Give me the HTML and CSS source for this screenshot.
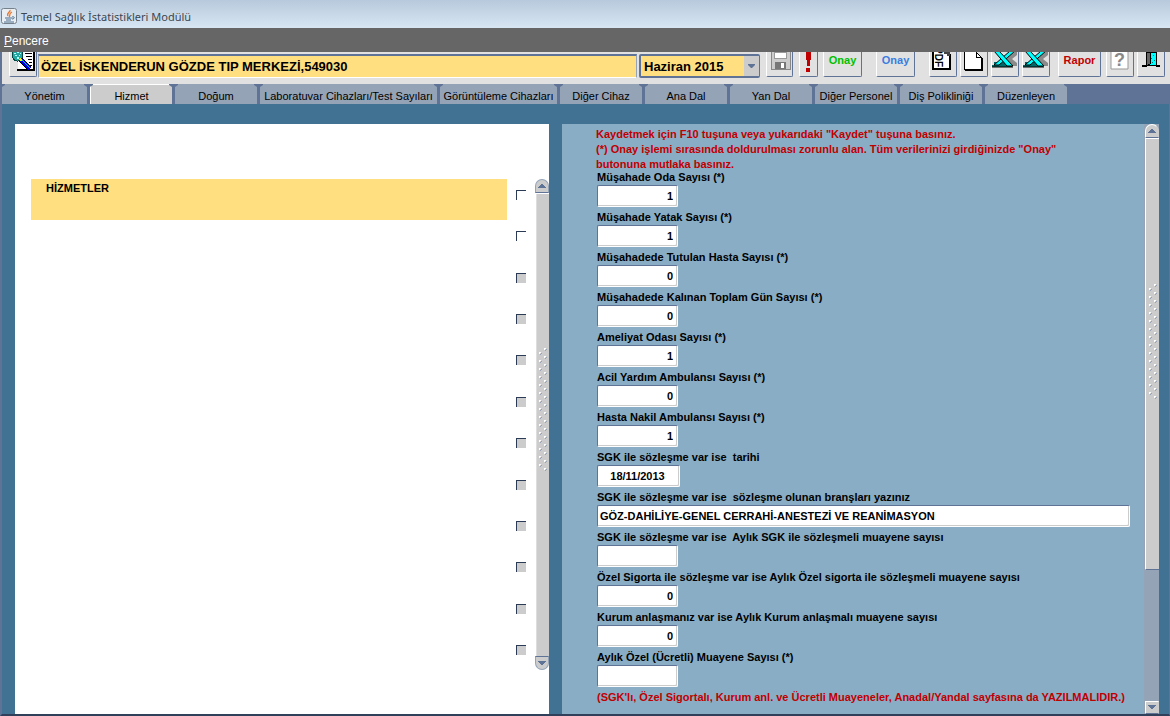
FILE: index.html
```html
<!DOCTYPE html>
<html lang="tr">
<head>
<meta charset="utf-8">
<title>Temel Sağlık İstatistikleri Modülü</title>
<link rel="stylesheet" href="styles.css">
</head>
<body>
<svg class="defs" aria-hidden="true">
  <defs>
    <pattern id="dots" width="15" height="8" patternUnits="userSpaceOnUse">
      <path d="M8 0h2v1h-1v1h-1zM3 4h2v1h-1v1h-1z" fill="#fff"/>
      <path d="M10 1h1v1h-1v1h-1v-1h1zM5 5h1v1h-1v1h-1v-1h1z" fill="#95a3b7"/>
    </pattern>
    <symbol id="excel" viewBox="0 0 28 18">
      <path d="M15 5l8-5h3v3l-5 4 5 4v3h-5l-4-4-3-2z" fill="#8a8a8a"/>
      <path d="M1 13h20v2H1zM3 10h12v3H3z" fill="#006868"/>
      <path d="M3 13L19-1h5L8 13z" fill="#0ff" stroke="#000"/>
      <path d="M3-1h5l14 15h-6z" fill="#0ff" stroke="#000"/>
      <path d="M1 15h21" stroke="#000"/>
    </symbol>
  </defs>
</svg>
<header class="titlebar">
  <svg class="java" viewBox="0 0 16 16" aria-hidden="true">
    <rect x=".5" y=".5" width="15" height="15" rx="2" fill="#e9eef3" stroke="#74808c"/>
    <path d="M9 2C10 4 5 5 7 8M11 4C7 6 10 7 8 9" fill="none" stroke="#e8762c" stroke-width="1.3"/>
    <path d="M4 10h7M5 12h5M3 14h10M11 9c3-1 3 2 0 2" fill="none" stroke="#4c6f91"/>
  </svg>
  <h1 class="title">Temel Sağlık İstatistikleri Modülü</h1>
</header>
<nav class="menubar"><a class="menu" href="#"><u>P</u>encere</a></nav>
<div class="toolbar">
  <button class="tool w28" aria-label="Ara">
    <svg width="26" height="22" viewBox="0 0 26 22" shape-rendering="crispEdges">
      <path d="M8 0h16v18H8z" fill="#fff"/>
      <path d="M24 0v18M7 18h18" fill="none" stroke="#000" stroke-width="2"/>
      <path d="M15 1h7M16 4h6M18 7h4M19 10h3M20 13h2" fill="none" stroke="#000"/>
      <ellipse cx="7.500" cy="3" rx="5.500" ry="6" fill="#22a8a0" stroke="#004848"/>
      <path d="M4 1h2v1H4zM7 0h2v1H7zM5 3h2v1H5zM9 3h1v1H9zM7 5h2v2H7zM10 1h1v1h-1z" fill="#b8ffff"/>
      <path d="M11 8l9 9" stroke="#000" stroke-width="5"/>
      <path d="M11 8l9 9" stroke="#0000e0" stroke-width="3"/>
      <path d="M12 8l8 8" stroke="#00c8ff"/>
      <path d="M10 7l2 2" stroke="#ff0" stroke-width="2"/>
    </svg>
  </button>
  <input class="facility" aria-label="Kurum" value="ÖZEL İSKENDERUN GÖZDE TIP MERKEZİ,549030">
  <span class="period">
    <select class="month" aria-label="Dönem"><option>Haziran 2015</option></select>
    <svg class="drop" viewBox="0 0 15 20" aria-hidden="true"><path d="M0 0h15v20H0z" fill="#ccc"/><path d="M4 8h7v1l-3 3h-1L4 9z" fill="#5f7396"/></svg>
  </span>
  <button class="tool w27 gap6" aria-label="Kaydet">
    <svg width="26" height="22" viewBox="0 0 26 22" shape-rendering="crispEdges">
      <path d="M4 0h19v18H5l-1-1z" fill="#ccc"/><path d="M4 0v17h19V0" fill="none" stroke="#888"/>
      <path d="M7 0h12v6H7z" fill="#fff" stroke="#999"/>
      <path d="M8 10h11v7H8z" fill="#777"/><path d="M14 11h3v5h-3z" fill="#fff"/>
    </svg>
  </button>
  <button class="tool w19 gap6" aria-label="Uyarı">
    <svg width="17" height="22" viewBox="0 0 17 22" shape-rendering="crispEdges"><path d="M6 0h5v8h-1v6H7V8H6zM6 16h4v4H6z" fill="#c00000"/></svg>
  </button>
  <button class="tool w39 gap5 green">Onay</button>
  <button class="tool w39 gap14 blue">Onay</button>
  <button class="tool w28 gap14" aria-label="PDF">
    <svg width="26" height="22" viewBox="0 0 26 22">
      <path d="M3 0h17v17H3z" fill="#fff"/><path d="M3 0v17h17V2" fill="none" stroke="#000" stroke-width="2"/>
      <path d="M14 0h6v4h-3V2h-3z" fill="#444"/>
      <text class="pdf" transform="translate(5 -5) rotate(90)">PDF</text>
    </svg>
  </button>
  <button class="tool w28 gap3" aria-label="Yeni">
    <svg width="26" height="22" viewBox="0 0 26 22" shape-rendering="crispEdges"><path d="M3 0h12l5 5v12H3z" fill="#fff"/><path d="M3 0v17h17V5h-5V0l5 5" fill="none" stroke="#000"/><path d="M4 18h17V6" fill="none" stroke="#000"/></svg>
  </button>
  <button class="tool w28 gap3" aria-label="Excel"><svg width="28" height="18"><use href="#excel"/></svg></button>
  <button class="tool w28 gap3" aria-label="Excel aktar"><svg width="28" height="18"><use href="#excel"/></svg></button>
  <button class="tool w43 gap8 red">Rapor</button>
  <button class="tool w28 gap5" aria-label="Yardım">
    <svg width="26" height="22" viewBox="0 0 26 22">
      <path d="M4 0h17v17H4z" fill="#fff"/><path d="M4 0v17h17V0" fill="none" stroke="#999"/>
      <text class="mark" x="7" y="14">?</text>
    </svg>
  </button>
  <button class="tool w28 gap3" aria-label="Çıkış">
    <svg width="26" height="22" viewBox="0 0 26 22" shape-rendering="crispEdges">
      <path d="M10 0h8v13h-8z" fill="#0ff" stroke="#000"/><path d="M15 3h1v1h-1zM13 6h1v1h-1zM16 8h1v1h-1zM14 10h1v1h-1z" fill="#007878"/>
      <path d="M8 0h4v12l-4 3z" fill="#666" stroke="#000"/><path d="M4 14h4M18 14h4" stroke="#000" stroke-width="2"/>
    </svg>
  </button>
</div>
<nav class="tabs">
  <button class="tab t85">Yönetim</button>
  <button class="tab t82 current">Hizmet</button>
  <button class="tab t82">Doğum</button>
  <button class="tab t177">Laboratuvar Cihazları/Test Sayıları</button>
  <button class="tab t117">Görüntüleme Cihazları</button>
  <button class="tab t82">Diğer Cihaz</button>
  <button class="tab t82">Ana Dal</button>
  <button class="tab t82">Yan Dal</button>
  <button class="tab t82">Diğer Personel</button>
  <button class="tab t82">Diş Polikliniği</button>
  <button class="tab t82">Düzenleyen</button>
</nav>
<main class="work">
  <section class="services">
    <h2 class="heading">HİZMETLER</h2>
    <div class="checks">
      <input class="check on" type="checkbox" aria-label="Hizmet 1">
      <input class="check on" type="checkbox" aria-label="Hizmet 2">
      <input class="check" type="checkbox" aria-label="Hizmet 3">
      <input class="check" type="checkbox" aria-label="Hizmet 4">
      <input class="check" type="checkbox" aria-label="Hizmet 5">
      <input class="check" type="checkbox" aria-label="Hizmet 6">
      <input class="check" type="checkbox" aria-label="Hizmet 7">
      <input class="check" type="checkbox" aria-label="Hizmet 8">
      <input class="check" type="checkbox" aria-label="Hizmet 9">
      <input class="check" type="checkbox" aria-label="Hizmet 10">
      <input class="check" type="checkbox" aria-label="Hizmet 11">
      <input class="check" type="checkbox" aria-label="Hizmet 12">
    </div>
    <div class="scroll">
      <button class="arrow up" aria-label="Yukarı"><svg width="8" height="5" shape-rendering="crispEdges"><path d="M3 0h2v1h1v1h1v1h1v1H0V3h1V2h1V1h1z" fill="#5f7396"/></svg></button>
      <div class="thumb"><svg class="grip" shape-rendering="crispEdges"><rect width="15" height="124" fill="url(#dots)"/></svg></div>
      <button class="arrow down" aria-label="Aşağı"><svg width="8" height="5" shape-rendering="crispEdges"><path d="M0 0h8v1H7v1H6v1H5v1H3V3H2V2H1V1H0z" fill="#5f7396"/></svg></button>
    </div>
  </section>
  <section class="details">
    <form class="form">
      <p class="note">Kaydetmek için F10 tuşuna veya yukarıdaki "Kaydet" tuşuna basınız.<br>(*) Onay işlemi sırasında doldurulması zorunlu alan. Tüm verilerinizi girdiğinizde "Onay"<br>butonuna mutlaka basınız.</p>
      <div class="field"><label for="f1">Müşahade Oda Sayısı (*)</label><input id="f1" class="box" value="1"></div>
      <div class="field"><label for="f2">Müşahade Yatak Sayısı (*)</label><input id="f2" class="box" value="1"></div>
      <div class="field"><label for="f3">Müşahadede Tutulan Hasta Sayısı (*)</label><input id="f3" class="box" value="0"></div>
      <div class="field"><label for="f4">Müşahadede Kalınan Toplam Gün Sayısı (*)</label><input id="f4" class="box" value="0"></div>
      <div class="field"><label for="f5">Ameliyat Odası Sayısı (*)</label><input id="f5" class="box" value="1"></div>
      <div class="field"><label for="f6">Acil Yardım Ambulansı Sayısı (*)</label><input id="f6" class="box" value="0"></div>
      <div class="field"><label for="f7">Hasta Nakil Ambulansı Sayısı (*)</label><input id="f7" class="box" value="1"></div>
      <div class="field"><label for="f8">SGK ile sözleşme var ise&nbsp; tarihi</label><input id="f8" class="box date" value="18/11/2013"></div>
      <div class="field"><label for="f9">SGK ile sözleşme var ise&nbsp; sözleşme olunan branşları yazınız</label><input id="f9" class="box wide" value="GÖZ-DAHİLİYE-GENEL CERRAHİ-ANESTEZİ VE REANİMASYON"></div>
      <div class="field"><label for="f10">SGK ile sözleşme var ise&nbsp; Aylık SGK ile sözleşmeli muayene sayısı</label><input id="f10" class="box"></div>
      <div class="field"><label for="f11">Özel Sigorta ile sözleşme var ise Aylık Özel sigorta ile sözleşmeli muayene sayısı</label><input id="f11" class="box" value="0"></div>
      <div class="field"><label for="f12">Kurum anlaşmanız var ise Aylık Kurum anlaşmalı muayene sayısı</label><input id="f12" class="box" value="0"></div>
      <div class="field"><label for="f13">Aylık Özel (Ücretli) Muayene Sayısı (*)</label><input id="f13" class="box"></div>
      <p class="footnote">(SGK'lı, Özel Sigortalı, Kurum anl. ve Ücretli Muayeneler, Anadal/Yandal sayfasına da YAZILMALIDIR.)</p>
    </form>
    <div class="scroll tracked">
      <button class="arrow up" aria-label="Yukarı"><svg width="8" height="5" shape-rendering="crispEdges"><path d="M3 0h2v1h1v1h1v1h1v1H0V3h1V2h1V1h1z" fill="#5f7396"/></svg></button>
      <div class="thumb part"><svg class="grip" shape-rendering="crispEdges"><rect width="15" height="116" fill="url(#dots)"/></svg></div>
      <div class="rest"></div>
      <button class="arrow end" aria-label="Aşağı"><svg width="8" height="5" shape-rendering="crispEdges"><path d="M0 0h8v1H7v1H6v1H5v1H3V3H2V2H1V1H0z" fill="#5f7396"/></svg></button>
    </div>
  </section>
</main>
</body>
</html>
```
FILE: styles.css
```css
* { box-sizing: border-box; }
html { height: 100%; }
body {
  margin: 0;
  min-height: 100%;
  display: flex;
  flex-direction: column;
  background: #427293;
  font: 11px "Liberation Sans", Arial, sans-serif;
  color: #000;
}
button, input, select { font: inherit; color: inherit; margin: 0; padding: 0; border: 0; border-radius: 0; }
h1, h2, p { margin: 0; font-size: inherit; }
.defs { position: absolute; width: 0; height: 0; }

.titlebar {
  display: flex;
  align-items: center;
  gap: 4px;
  height: 28px;
  padding: 4px 1px 0;
  background: linear-gradient(#b7c9dc, #d8e6f3);
}
.java { width: 16px; height: 16px; }
.title { font: 12px "Noto Sans", "Open Sans", sans-serif; font-size: 11px; color: #3c4650; }

.menubar { height: 24px; padding: 0 4px; background: #666; }
.menu { color: #fff; font-size: 12px; line-height: 26px; text-decoration: none; }

.toolbar {
  display: flex;
  align-items: flex-start;
  height: 32px;
  padding: 0 5px 0 7px;
  background: #e1e1e1;
  border-left: 2px solid #5f7396;
}
.tool {
  display: flex;
  flex: none;
  justify-content: center;
  align-items: flex-start;
  height: 25px;
  overflow: hidden;
  background: #e1e1e1;
  border: solid;
  border-width: 0 1px 1px;
  border-color: #fff #5f7396 #5f7396 #fff;
  border-radius: 0 0 2px 2px;
  font-weight: bold;
  line-height: 17px;
}
.tool svg { flex: none; }
.pdf { font: bold 10px "Liberation Sans", Arial, sans-serif; }
.mark { font: bold 18px "Liberation Sans", Arial, sans-serif; fill: #888; }
.w19 { width: 19px; }
.w27 { width: 27px; }
.w28 { width: 28px; }
.w39 { width: 39px; }
.w43 { width: 43px; }
.gap3 { margin-left: 3px; }
.gap5 { margin-left: 5px; }
.gap6 { margin-left: 6px; }
.gap8 { margin-left: 8px; }
.gap14 { margin-left: 14px; }
.green { color: #00c000; }
.blue { color: #3a7ce0; }
.red { color: #c00000; }
.facility {
  flex: 1;
  min-width: 0;
  height: 24px;
  margin: 2px 2px 0 1px;
  padding: 0 2px;
  background: #ffdf80;
  border: 1px solid #95a3b7;
  border-top: 2px solid #5f7396;
  border-bottom: 1px solid #fff;
  font-size: 13px;
  font-weight: bold;
}
.period { position: relative; flex: none; width: 121px; height: 24px; margin-top: 2px; }
.month {
  width: 100%;
  height: 100%;
  padding: 0 18px 0 3px;
  appearance: none;
  background: #ffdf80;
  border: 2px solid #5f7396;
  border-radius: 2px;
  font-size: 13px;
  font-weight: bold;
}
.drop { position: absolute; right: 1px; top: 2px; width: 15px; height: 20px; pointer-events: none; }

.tabs { display: flex; gap: 3px; height: 20px; padding-left: 2px; background: #5f7396; }
.tab {
  height: 20px;
  padding-top: 4px;
  background: #95a3b7;
  white-space: nowrap;
  clip-path: polygon(3px 0, calc(100% - 3px) 0, calc(100% - 3px) 1px, 100% 3px, 100% 100%, 0 100%, 0 3px, 3px 1px);
}
.current { background: #ccc; border-top: 1px solid #fff; border-left: 1px solid #fff; padding-top: 3px; }
.t82 { width: 82px; }
.t85 { width: 85px; }
.t117 { width: 117px; }
.t177 { width: 177px; }

.work {
  flex: 1;
  display: grid;
  grid-template-columns: 534fr 597fr;
  gap: 13px;
  padding: 20px 10px 0 13px;
  border: solid #5f7396;
  border-width: 0 1px 2px 2px;
  border-bottom-color: #30405a;
}
.services { display: flex; gap: 9px; padding: 55px 0 44px 16px; background: #fff; }
.heading {
  flex: 1;
  height: 41px;
  padding: 3px 15px;
  background: #ffdf80;
  font-size: 11px;
}
.checks { display: flex; flex-direction: column; justify-content: space-between; padding: 11px 0 15px; }
.check {
  display: block;
  width: 10px;
  height: 10px;
  appearance: none;
  background: #ccc;
  border: solid #2b3a55;
  border-width: 1px 0 0 1px;
}
.on { background: #fff; }

.scroll { display: flex; flex-direction: column; flex: none; width: 14px; }
.tracked { width: 15px; background: #95a3b7; padding-left: 1px; }
.arrow {
  display: flex;
  justify-content: center;
  align-items: center;
  height: 14px;
  background: #ccc;
  border: 1px solid #95a3b7;
}
.up { border-bottom-color: #5f7396; border-radius: 7px 7px 0 0; }
.down { border-top-color: #5f7396; border-radius: 0 0 7px 7px; }
.tracked .arrow { border-color: #fff #ccc #5f7396 #fff; }
.tracked .end { height: 13px; }
.thumb {
  flex: 1;
  display: flex;
  align-items: center;
  padding-bottom: 30px;
  background: #ccc;
  border-left: 1px solid #fff;
  border-top: 1px solid #fff;
  box-shadow: inset 1px 0 #ddd;
}
.part { flex: 420; border-bottom: 1px solid #5f7396; padding-bottom: 24px; box-shadow: none; }
.rest { flex: 135; }
.grip { width: 13px; height: 124px; }
.part .grip { height: 116px; }

.details { display: flex; background: #88adc5; }
.form { flex: 1; min-width: 0; padding: 3px 14px 0 34px; font-weight: bold; }
.note { line-height: 15px; color: #c00000; white-space: nowrap; }
.field { display: flex; flex-direction: column; align-items: flex-start; gap: 2px; height: 40px; padding-left: 1px; }
.field label { line-height: 11px; white-space: nowrap; }
.box {
  width: 81px;
  height: 22px;
  padding: 0 4px 0 2px;
  background: #fff;
  border: 1px solid #fff;
  border-top-color: #5f7396;
  border-left-color: #5f7396;
  border-radius: 2px;
  box-shadow: inset -1px -1px #ccc;
  text-align: right;
}
.date { width: 83px; text-align: center; }
.wide { width: 100%; text-align: left; }
.footnote { padding-left: 1px; line-height: 11px; color: #c00000; white-space: nowrap; }
```
